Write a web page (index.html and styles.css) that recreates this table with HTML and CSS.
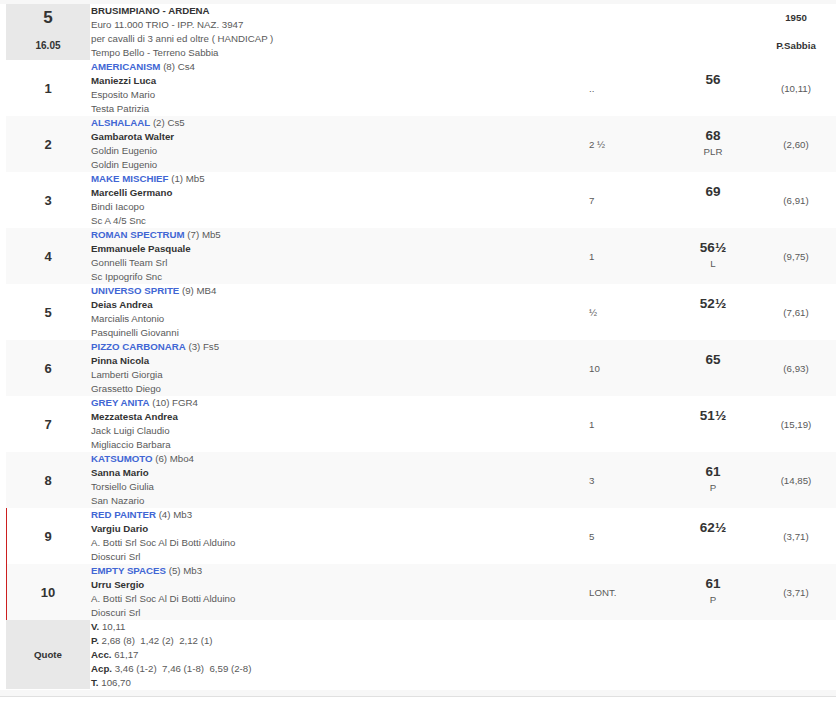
FILE: index.html
```html
<!DOCTYPE html>
<html lang="it">
<head>
<meta charset="utf-8">
<title>Corsa 5</title>
<link rel="stylesheet" href="styles.css">
</head>
<body>
<div class="page">
  <div class="race">
    <div class="race-no"><div class="big">5</div><div class="time">16.05</div></div>
    <div class="race-info">
      <div class="ln strong">BRUSIMPIANO - ARDENA</div>
      <div class="ln">Euro 11.000 TRIO - IPP. NAZ. 3947</div>
      <div class="ln">per cavalli di 3 anni ed oltre ( HANDICAP )</div>
      <div class="ln">Tempo Bello - Terreno Sabbia</div>
    </div>
    <div class="race-meta"><div class="m1">1950</div><div class="m2">P.Sabbia</div></div>
  </div>

  <div class="row">
    <div class="pos">1</div>
    <div class="info"><div class="ln"><span class="horse">AMERICANISM</span> (8) Cs4</div><div class="ln strong">Maniezzi Luca</div><div class="ln">Esposito Mario</div><div class="ln">Testa Patrizia</div></div>
    <div class="dist">..</div>
    <div class="wt"><div class="num">56</div><div class="sub"></div></div>
    <div class="odds">(10,11)</div>
  </div>
  <div class="row alt">
    <div class="pos">2</div>
    <div class="info"><div class="ln"><span class="horse">ALSHALAAL</span> (2) Cs5</div><div class="ln strong">Gambarota Walter</div><div class="ln">Goldin Eugenio</div><div class="ln">Goldin Eugenio</div></div>
    <div class="dist">2 ½</div>
    <div class="wt"><div class="num">68</div><div class="sub">PLR</div></div>
    <div class="odds">(2,60)</div>
  </div>
  <div class="row">
    <div class="pos">3</div>
    <div class="info"><div class="ln"><span class="horse">MAKE MISCHIEF</span> (1) Mb5</div><div class="ln strong">Marcelli Germano</div><div class="ln">Bindi Iacopo</div><div class="ln">Sc A 4/5 Snc</div></div>
    <div class="dist">7</div>
    <div class="wt"><div class="num">69</div><div class="sub"></div></div>
    <div class="odds">(6,91)</div>
  </div>
  <div class="row alt">
    <div class="pos">4</div>
    <div class="info"><div class="ln"><span class="horse">ROMAN SPECTRUM</span> (7) Mb5</div><div class="ln strong">Emmanuele Pasquale</div><div class="ln">Gonnelli Team Srl</div><div class="ln">Sc Ippogrifo Snc</div></div>
    <div class="dist">1</div>
    <div class="wt"><div class="num">56½</div><div class="sub">L</div></div>
    <div class="odds">(9,75)</div>
  </div>
  <div class="row">
    <div class="pos">5</div>
    <div class="info"><div class="ln"><span class="horse">UNIVERSO SPRITE</span> (9) MB4</div><div class="ln strong">Deias Andrea</div><div class="ln">Marcialis Antonio</div><div class="ln">Pasquinelli Giovanni</div></div>
    <div class="dist">½</div>
    <div class="wt"><div class="num">52½</div><div class="sub"></div></div>
    <div class="odds">(7,61)</div>
  </div>
  <div class="row alt">
    <div class="pos">6</div>
    <div class="info"><div class="ln"><span class="horse">PIZZO CARBONARA</span> (3) Fs5</div><div class="ln strong">Pinna Nicola</div><div class="ln">Lamberti Giorgia</div><div class="ln">Grassetto Diego</div></div>
    <div class="dist">10</div>
    <div class="wt"><div class="num">65</div><div class="sub"></div></div>
    <div class="odds">(6,93)</div>
  </div>
  <div class="row">
    <div class="pos">7</div>
    <div class="info"><div class="ln"><span class="horse">GREY ANITA</span> (10) FGR4</div><div class="ln strong">Mezzatesta Andrea</div><div class="ln">Jack Luigi Claudio</div><div class="ln">Migliaccio Barbara</div></div>
    <div class="dist">1</div>
    <div class="wt"><div class="num">51½</div><div class="sub"></div></div>
    <div class="odds">(15,19)</div>
  </div>
  <div class="row alt">
    <div class="pos">8</div>
    <div class="info"><div class="ln"><span class="horse">KATSUMOTO</span> (6) Mbo4</div><div class="ln strong">Sanna Mario</div><div class="ln">Torsiello Giulia</div><div class="ln">San Nazario</div></div>
    <div class="dist">3</div>
    <div class="wt"><div class="num">61</div><div class="sub">P</div></div>
    <div class="odds">(14,85)</div>
  </div>
  <div class="row flag">
    <div class="pos">9</div>
    <div class="info"><div class="ln"><span class="horse">RED PAINTER</span> (4) Mb3</div><div class="ln strong">Vargiu Dario</div><div class="ln">A. Botti Srl Soc Al Di Botti Alduino</div><div class="ln">Dioscuri Srl</div></div>
    <div class="dist">5</div>
    <div class="wt"><div class="num">62½</div><div class="sub"></div></div>
    <div class="odds">(3,71)</div>
  </div>
  <div class="row alt flag">
    <div class="pos">10</div>
    <div class="info"><div class="ln"><span class="horse">EMPTY SPACES</span> (5) Mb3</div><div class="ln strong">Urru Sergio</div><div class="ln">A. Botti Srl Soc Al Di Botti Alduino</div><div class="ln">Dioscuri Srl</div></div>
    <div class="dist">LONT.</div>
    <div class="wt"><div class="num">61</div><div class="sub">P</div></div>
    <div class="odds">(3,71)</div>
  </div>

  <div class="quote">
    <div class="quote-label">Quote</div>
    <div class="quote-info">
      <div class="ln"><b>V.</b> 10,11</div>
      <div class="ln"><b>P.</b> 2,68 (8)&nbsp; 1,42 (2)&nbsp; 2,12 (1)</div>
      <div class="ln"><b>Acc.</b> 61,17</div>
      <div class="ln"><b>Acp.</b> 3,46 (1-2)&nbsp; 7,46 (1-8)&nbsp; 6,59 (2-8)</div>
      <div class="ln"><b>T.</b> 106,70</div>
    </div>
  </div>
</div>
<div class="foot"></div>
</body>
</html>
```

FILE: styles.css
```css
html, body {
  margin: 0;
  padding: 0;
  background: #ffffff;
}
body {
  font-family: "Liberation Sans", Arial, sans-serif;
  font-size: 9.7px;
  color: #595959;
}
.page {
  border-top: 4px solid #f7f7f7;
  padding-left: 6px;
}
.ln {
  height: 14px;
  line-height: 14px;
  white-space: nowrap;
}
.strong, b {
  font-weight: bold;
  color: #333333;
}

.race, .row, .quote {
  display: grid;
  grid-template-columns: 84px 499px 81px 86px 1fr;
}
.race-no {
  background: #e8e8e8;
  color: #333333;
  font-weight: bold;
  text-align: center;
}
.race-no .big {
  font-size: 17px;
  height: 28px;
  line-height: 27px;
}
.race-no .time {
  font-size: 10px;
  height: 28px;
  line-height: 28px;
}
.race-info {
  grid-column: 2 / 5;
  padding-left: 1px;
}
.race-meta {
  grid-column: 5;
  text-align: center;
  font-weight: bold;
  color: #333333;
}
.race-meta .m1 { height: 28px; line-height: 27px; }
.race-meta .m2 { height: 28px; line-height: 28px; }

.row {
  height: 56px;
  background: #ffffff;
}
.row.alt { background: #f9f9f9; }
.row.flag { box-shadow: inset 1px 0 0 #cc1f1f; }
.pos {
  display: flex;
  align-items: center;
  justify-content: center;
  font-size: 13px;
  font-weight: bold;
  color: #333333;
}
.info { padding-left: 1px; }
.horse {
  color: #4166d4;
  font-weight: bold;
}
.dist {
  display: flex;
  align-items: center;
}
.wt {
  text-align: center;
  padding-top: 11px;
}
.wt .num {
  font-size: 13.5px;
  font-weight: bold;
  color: #333333;
  height: 18px;
  line-height: 18px;
}
.wt .sub {
  height: 14px;
  line-height: 14px;
}
.odds {
  display: flex;
  align-items: center;
  justify-content: center;
}

.quote {
  background: #ffffff;
}
.quote-label {
  background: #e8e8e8;
  display: flex;
  align-items: center;
  justify-content: center;
  font-weight: bold;
  color: #333333;
  height: 69px;
}
.quote-info {
  grid-column: 2 / 6;
  padding-left: 1px;
}
.foot {
  height: 6px;
  background: #f7f7f7;
  border-bottom: 1px solid #e0e0e0;
}
```
